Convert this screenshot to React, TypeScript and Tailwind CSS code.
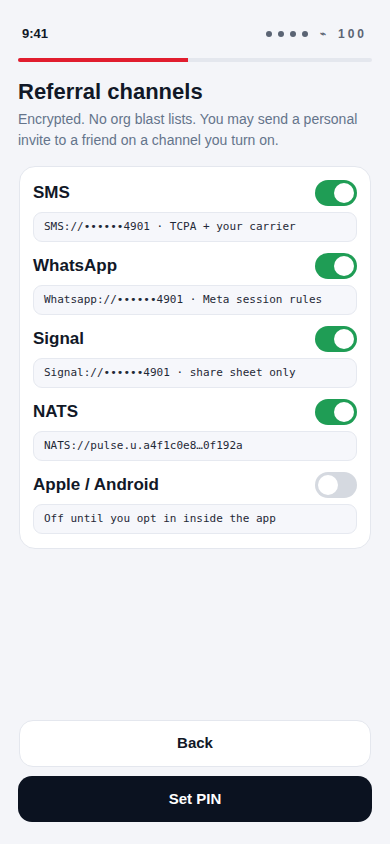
import { useState } from "react";

const channels = [
  { name: "SMS", detail: "SMS://••••••4901 · TCPA + your carrier", on: true },
  { name: "WhatsApp", detail: "Whatsapp://••••••4901 · Meta session rules", on: true },
  { name: "Signal", detail: "Signal://••••••4901 · share sheet only", on: true },
  { name: "NATS", detail: "NATS://pulse.u.a4f1c0e8…0f192a", on: true },
  { name: "Apple / Android", detail: "Off until you opt in inside the app", on: false },
];

function Toggle({ on, onClick }: { on: boolean; onClick: () => void }) {
  return (
    <button
      onClick={onClick}
      className={`w-[42px] h-[26px] rounded-full flex items-center px-[3px] ${
        on ? "bg-[#1f9d55] justify-end" : "bg-[#d5d9e0] justify-start"
      }`}
    >
      <span className="w-[20px] h-[20px] rounded-full bg-white block" />
    </button>
  );
}

export default function App() {
  const [state, setState] = useState(channels.map((c) => c.on));

  return (
    <div
      className="min-h-screen bg-[#f4f5f9] flex flex-col px-[18px] pb-[22px]"
      style={{ fontFamily: '"Liberation Sans", Arial, sans-serif' }}
    >
      {/* status bar */}
      <div className="flex justify-between items-center pt-[26px] h-[42px] pl-[4px] pr-[5px]">
        <span className="text-[13px] font-bold text-[#111827] leading-4">9:41</span>
        <span className="flex items-center gap-[12px] text-[12px] font-bold text-[#5b6474] leading-4">
          <span className="flex gap-[6px]">
            <span className="w-[6px] h-[6px] rounded-full bg-[#5b6474]" />
            <span className="w-[6px] h-[6px] rounded-full bg-[#5b6474]" />
            <span className="w-[6px] h-[6px] rounded-full bg-[#5b6474]" />
            <span className="w-[6px] h-[6px] rounded-full bg-[#5b6474]" />
          </span>
          <span className="text-[10px]">⌁</span>
          <span className="tracking-[3px]">100</span>
        </span>
      </div>

      {/* progress */}
      <div className="mt-[16px] h-[4px] rounded-full bg-[#e4e7ee] overflow-hidden">
        <div className="h-full w-[48%] bg-[#e11d2e]" />
      </div>

      <h1 className="mt-[16px] text-[22px] leading-[28px] font-bold text-[#111827]">
        Referral channels
      </h1>
      <p className="mt-[3px] text-[14px] leading-[21px] text-[#64748b]">
        Encrypted. No org blast lists. You may send a personal invite to a friend on a channel you turn on.
      </p>

      {/* channel list */}
      <div className="mt-[15px] mx-px bg-white border border-[#e4e7ee] rounded-[16px] px-[13px] pt-[13px] pb-[14px] flex flex-col gap-[11px]">
        {channels.map((c, i) => (
          <div key={c.name} className="flex flex-col gap-[6px]">
            <div className="flex items-center justify-between h-[26px]">
              <span className="text-[17px] font-bold text-[#111827]">{c.name}</span>
              <Toggle
                on={state[i]}
                onClick={() => setState(state.map((v, j) => (j === i ? !v : v)))}
              />
            </div>
            <div
              className="h-[30px] flex items-center px-[10px] rounded-[9px] bg-[#f6f7fb] border border-[#e6e9f0] text-[11px] text-[#1f2937]"
              style={{ fontFamily: '"DejaVu Sans Mono", monospace' }}
            >
              {c.detail}
            </div>
          </div>
        ))}
      </div>

      <div className="flex-1" />

      <div className="flex flex-col gap-[9px]">
        <button className="h-[47px] mx-px rounded-[14px] bg-white border border-[#e4e7ee] text-[15px] font-bold text-[#111827]">
          Back
        </button>
        <button className="h-[46px] rounded-[14px] bg-[#0b1220] text-[15px] font-bold text-white">
          Set PIN
        </button>
      </div>
    </div>
  );
}
